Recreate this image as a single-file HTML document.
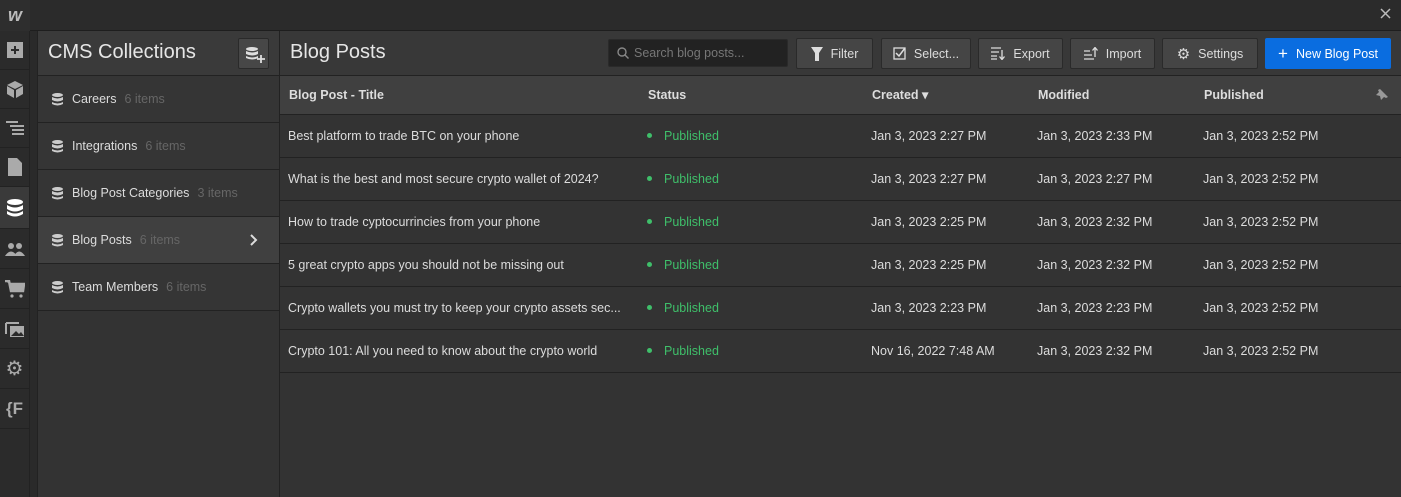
<!DOCTYPE html>
<html><head><meta charset="utf-8"><style>
*{box-sizing:border-box;margin:0;padding:0}
body{width:1401px;height:497px;background:#2b2b2b;font-family:"Liberation Sans",sans-serif;color:#d9d9d9;position:relative;overflow:hidden;font-size:12.5px}
.top{position:absolute;left:0;top:0;width:1401px;height:31px;background:#2b2b2b;border-bottom:1px solid #1e1e1e}
.logo{position:absolute;left:0;top:0;width:30px;height:31px;background:#2e2e2e;color:#bbb;font-weight:bold;font-style:italic;font-size:18px;text-align:center;line-height:30px}
.close{position:absolute;right:10px;top:8px}
.rail{position:absolute;left:0;top:31px;width:30px;height:466px;background:#2b2b2b;border-right:1px solid #222}
.ri{height:39px;border-bottom:1px solid #222;display:flex;align-items:center;justify-content:center;color:#aaa}
.ri.act{background:#3a3a3a;color:#fff}
.gap{position:absolute;left:30px;top:31px;width:7px;height:466px;background:#2a2a2a}
.panel{position:absolute;left:37px;top:31px;width:243px;height:466px;background:#333;border-right:1px solid #222;border-left:1px solid #222}
.ph{height:45px;background:#3a3a3a;border-bottom:1px solid #222;position:relative}
.ph h1{font-weight:normal;font-size:20px;color:#e6e6e6;position:absolute;left:10px;top:10px}
.addb{position:absolute;right:10px;top:7px;width:31px;height:31px;background:#474747;border:1px solid #2a2a2a;border-radius:2px}
.ci{height:47px;border-bottom:1px solid #222;display:flex;align-items:center;padding-left:14px;font-size:12.5px;color:#dcdcdc;background:#353535;position:relative}
.ci.sel{background:#404040}
.ci .n{color:#666;margin-left:8px}
.ci svg{margin-right:9px}
.main{position:absolute;left:280px;top:31px;width:1121px;height:466px;background:#333}
.mh{height:45px;background:#383838;border-bottom:1px solid #222;position:relative}
.mh h1{font-weight:normal;font-size:20px;color:#e6e6e6;position:absolute;left:10px;top:10px}
.btn{position:absolute;top:7px;height:31px;background:#454545;border:1px solid #2a2a2a;border-radius:2px;color:#ddd;font-size:12.5px;display:flex;align-items:center;justify-content:center;gap:8px}
.search{position:absolute;left:328px;top:8px;width:180px;height:28px;background:#222;border:1px solid #2a2a2a;border-radius:2px;color:#777;font-size:12.5px;padding-left:25px;line-height:26px}
table{border-collapse:collapse;width:1121px}
th{height:38px;background:#404040;text-align:left;font-weight:bold;font-size:12.5px;color:#ddd;border-bottom:1px solid #222;padding-left:9px;vertical-align:middle}
td{height:43px;border-bottom:1px solid #222;padding-left:8px;font-size:12.5px;color:#dcdcdc;background:#333}
.pub{color:#3fbf6a}
.pub:before{content:"";display:inline-block;width:5px;height:5px;border-radius:50%;background:#3fbf6a;margin-right:12px;vertical-align:2px}
</style></head><body>
<div class="top"><div class="logo">w</div><svg class="close" width="11" height="11"><path d="M1 1l9 9M10 1l-9 9" stroke="#bbb" stroke-width="1.5"/></svg></div>
<div class="rail">
<div class="ri"><svg width="16" height="16"><rect x="0" y="0" width="16" height="16" fill="#aaa"/><path d="M8 4v8M4 8h8" stroke="#2b2b2b" stroke-width="2"/></svg></div>
<div class="ri"><svg width="18" height="18"><path d="M9 1l8 4-8 4-8-4z M1 6l7 4v8l-7-4z M17 6l-7 4v8l7-4z" fill="#aaa"/></svg></div>
<div class="ri"><svg width="18" height="14"><path d="M0 1h12M4 5h14M6 9h12M6 13h12" stroke="#aaa" stroke-width="2"/></svg></div>
<div class="ri"><svg width="14" height="18"><path d="M0 0h9l5 5v13h-14z" fill="#aaa"/></svg></div>
<div class="ri act" style="height:42px"><svg width="16" height="18"><ellipse cx="8" cy="3" rx="8" ry="3" fill="#fff"/><path d="M0 6q8 5 16 0v4q-8 5-16 0zM0 12q8 5 16 0v3q-8 5-16 0z" fill="#fff"/></svg></div>
<div class="ri" style="height:40px"><svg width="20" height="14"><circle cx="6" cy="4" r="3" fill="#aaa"/><circle cx="14" cy="4" r="3" fill="#aaa"/><path d="M0 14q6-9 12 0zM9 14q5-9 11 0z" fill="#aaa"/></svg></div>
<div class="ri" style="height:40px"><svg width="20" height="18"><path d="M0 1h4l2 10h12l1-7h-14" stroke="#aaa" stroke-width="2.5" fill="#aaa"/><circle cx="7" cy="16" r="1.6" fill="#aaa"/><circle cx="16" cy="16" r="1.6" fill="#aaa"/></svg></div>
<div class="ri" style="height:40px"><svg width="20" height="16"><path d="M1 2h13M1 2v11" stroke="#aaa" stroke-width="2"/><rect x="5" y="5" width="14" height="11" fill="#aaa"/><path d="M6 15l5-5 3 3 2-2 3 4z" fill="#2b2b2b"/></svg></div>
<div class="ri" style="font-size:20px;height:40px">⚙</div>
<div class="ri" style="font-weight:bold;font-size:17px;height:40px">{F</div>
</div>
<div class="gap"></div>
<div class="panel">
<div class="ph"><h1>CMS Collections</h1><div class="addb"><svg width="31" height="31"><ellipse cx="13" cy="10" rx="6" ry="2" fill="#ddd"/><path d="M7 12q6 3 12 0v3q-6 3-12 0zM7 17q6 3 12 0v2q-6 3-12 0z" fill="#ddd"/><path d="M22 16v8M18 20h8" stroke="#ddd" stroke-width="1.8"/></svg></div></div>
<div class="ci"><svg width="11" height="13"><ellipse cx="5.5" cy="2" rx="5.5" ry="2" fill="#ccc"/><path d="M0 4q5.5 3 11 0v3q-5.5 3-11 0zM0 9q5.5 3 11 0v2q-5.5 3-11 0z" fill="#ccc"/></svg>Careers<span class="n">6 items</span></div>
<div class="ci"><svg width="11" height="13"><ellipse cx="5.5" cy="2" rx="5.5" ry="2" fill="#ccc"/><path d="M0 4q5.5 3 11 0v3q-5.5 3-11 0zM0 9q5.5 3 11 0v2q-5.5 3-11 0z" fill="#ccc"/></svg>Integrations<span class="n">6 items</span></div>
<div class="ci"><svg width="11" height="13"><ellipse cx="5.5" cy="2" rx="5.5" ry="2" fill="#ccc"/><path d="M0 4q5.5 3 11 0v3q-5.5 3-11 0zM0 9q5.5 3 11 0v2q-5.5 3-11 0z" fill="#ccc"/></svg>Blog Post Categories<span class="n">3 items</span></div>
<div class="ci sel"><svg width="11" height="13"><ellipse cx="5.5" cy="2" rx="5.5" ry="2" fill="#ccc"/><path d="M0 4q5.5 3 11 0v3q-5.5 3-11 0zM0 9q5.5 3 11 0v2q-5.5 3-11 0z" fill="#ccc"/></svg>Blog Posts<span class="n">6 items</span><svg style="position:absolute;right:12px" width="8" height="12"><path d="M1 1l5 5-5 5" stroke="#ddd" stroke-width="2" fill="none"/></svg></div>
<div class="ci"><svg width="11" height="13"><ellipse cx="5.5" cy="2" rx="5.5" ry="2" fill="#ccc"/><path d="M0 4q5.5 3 11 0v3q-5.5 3-11 0zM0 9q5.5 3 11 0v2q-5.5 3-11 0z" fill="#ccc"/></svg>Team Members<span class="n">6 items</span></div>
</div>
<div class="main">
<div class="mh"><h1>Blog Posts</h1>
<div class="search"><svg style="position:absolute;left:8px;top:7px" width="12" height="12"><circle cx="5" cy="5" r="4" stroke="#888" stroke-width="1.4" fill="none"/><path d="M8 8l3.5 3.5" stroke="#888" stroke-width="1.4"/></svg>Search blog posts...</div>
<div class="btn" style="left:516px;width:77px"><svg width="12" height="14"><path d="M0 0h12l-4 6v8h-4v-8z" fill="#ddd"/></svg>Filter</div>
<div class="btn" style="left:601px;width:90px"><svg width="13" height="13"><rect x="1" y="1" width="11" height="11" stroke="#ddd" fill="none" stroke-width="1.3"/><path d="M3 6l3 3 6-8" stroke="#ddd" stroke-width="1.5" fill="none"/></svg>Select...</div>
<div class="btn" style="left:698px;width:85px"><svg width="14" height="13"><path d="M0 1h10M0 5h8M0 9h6M0 12h6M11 3v9M8.5 9.5l2.5 3 2.5-3" stroke="#ddd" stroke-width="1.3" fill="none"/></svg>Export</div>
<div class="btn" style="left:790px;width:85px"><svg width="14" height="13"><path d="M0 12h10M0 8h8M0 4h6M11 10V1M8.5 3.5l2.5-3 2.5 3" stroke="#ddd" stroke-width="1.3" fill="none"/></svg>Import</div>
<div class="btn" style="left:882px;width:96px"><span style="font-size:15px">⚙</span>Settings</div>
<div class="btn" style="left:985px;width:126px;background:#0a6de0;border-color:#0a6de0;color:#fff"><span style="font-size:17px">+</span>New Blog Post</div>
</div>
<table>
<tr><th style="width:359px">Blog Post - Title</th><th style="width:224px">Status</th><th style="width:166px">Created ▾</th><th style="width:166px">Modified</th><th style="position:relative">Published<svg style="position:absolute;right:12px;top:12px" width="14" height="14"><path d="M5 1l8 8-2 1-2-1-3 3-1-4-4 5 4-5-4-1 3-3-1-2z" fill="#999"/></svg></th></tr>
<tr><td>Best platform to trade BTC on your phone</td><td><span class="pub">Published</span></td><td>Jan 3, 2023 2:27 PM</td><td>Jan 3, 2023 2:33 PM</td><td>Jan 3, 2023 2:52 PM</td></tr>
<tr><td>What is the best and most secure crypto wallet of 2024?</td><td><span class="pub">Published</span></td><td>Jan 3, 2023 2:27 PM</td><td>Jan 3, 2023 2:27 PM</td><td>Jan 3, 2023 2:52 PM</td></tr>
<tr><td>How to trade cyptocurrincies from your phone</td><td><span class="pub">Published</span></td><td>Jan 3, 2023 2:25 PM</td><td>Jan 3, 2023 2:32 PM</td><td>Jan 3, 2023 2:52 PM</td></tr>
<tr><td>5 great crypto apps you should not be missing out</td><td><span class="pub">Published</span></td><td>Jan 3, 2023 2:25 PM</td><td>Jan 3, 2023 2:32 PM</td><td>Jan 3, 2023 2:52 PM</td></tr>
<tr><td>Crypto wallets you must try to keep your crypto assets sec...</td><td><span class="pub">Published</span></td><td>Jan 3, 2023 2:23 PM</td><td>Jan 3, 2023 2:23 PM</td><td>Jan 3, 2023 2:52 PM</td></tr>
<tr><td>Crypto 101: All you need to know about the crypto world</td><td><span class="pub">Published</span></td><td>Nov 16, 2022 7:48 AM</td><td>Jan 3, 2023 2:32 PM</td><td>Jan 3, 2023 2:52 PM</td></tr>
</table>
</div>
</body></html>
